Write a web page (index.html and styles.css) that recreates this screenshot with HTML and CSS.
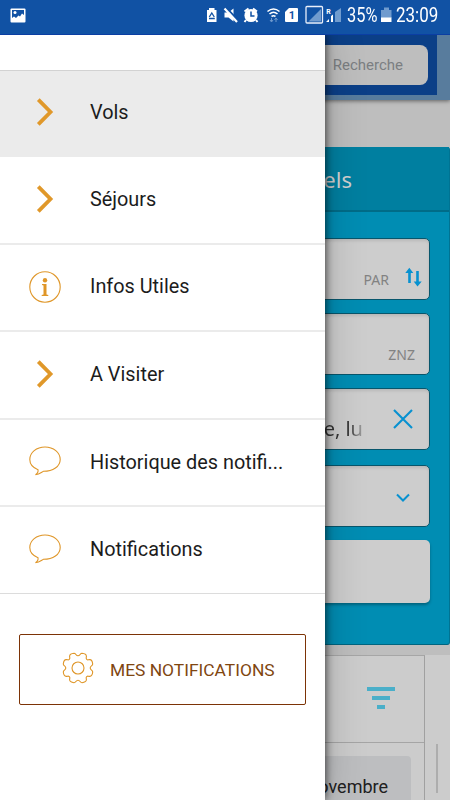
FILE: index.html
```html
<!DOCTYPE html>
<html lang="fr">
<head>
<meta charset="utf-8">
<meta name="viewport" content="width=device-width, initial-scale=1">
<title>Menu</title>
<link rel="stylesheet" href="styles.css">
</head>
<body>
<header class="status">
  <svg class="status-photo" width="16" height="16" viewBox="0 0 16 16"><rect x=".5" y=".5" width="15" height="14" rx="1" fill="#fff"/><path d="M2 2h12v5l-2-1.5-2 3-1.5-1L6 10 4 8.500 2 10z" fill="#1152a4"/><circle cx="5" cy="4.500" r="1.500" fill="#fff"/></svg>
  <div class="status-right">
    <svg width="142" height="34" viewBox="205 0 142 34">
      <g fill="#fff">
        <path d="M207 10h2V8h5.500v2h2v12H207z"/>
        <path d="M209.300 17 211.800 13l2.500 4M209 18.500h5.800" fill="none" stroke="#1152a4" stroke-width="1.300"/>
        <path d="M224.500 12.500h4l5-4v13l-5-4h-4z"/>
        <path d="m226.500 8 13 14" stroke="#1152a4" stroke-width="2"/>
        <path d="m224.500 8.500 12.500 13.500" stroke="#fff" stroke-width="2.200"/>
        <circle cx="251" cy="15.500" r="6.600"/>
        <path d="m244.500 11.500 4-3m8.500 3-4-3M246 20l-1.500 2M256 20l1.500 2" stroke="#fff" stroke-width="2"/>
        <path d="M251 11.500v4.500h3.500" fill="none" stroke="#1152a4" stroke-width="1.500"/>
        <path d="M267.500 11.500q6-5 12 0M269.500 14q4-3.500 8 0M271.500 16.500q2-1.500 4 0" fill="none" stroke="#fff" stroke-width="1.600"/>
        <path d="M271.500 18v3.500m-1.500-1.500 1.500 2 1.500-2M276 22v-3.500m-1.500 1.500 1.500-2 1.500 2" fill="none" stroke="#6f99cd"/>
        <path d="M289 8h8q1 0 1 1v12q0 1-1 1h-11q-1 0-1-1v-9z"/>
      </g>
      <text x="288.800" y="19" class="sim">1</text>
      <rect x="306" y="6.500" width="16.500" height="16.500" rx="1" fill="#1152a4" stroke="#e9effa" stroke-width="1.300"/>
      <path d="M308.500 21.500 321 9v12.500z" fill="#709bce"/>
      <text x="326.300" y="14" class="roaming">R</text>
      <path d="M326 22l3-3v3zM331 22v-6l2-1.500V22z" fill="#fff"/>
      <path d="M335 22V12l6-4v14z" fill="#709bce"/>
    </svg>
    <span class="reading percent">35%</span>
    <svg class="battery" width="11" height="15" viewBox="0 0 11 15"><path d="M0 3h3V.5h5V3h2.500v8H0z" fill="#709bce"/><path d="M0 10.500h10.500V15H0z" fill="#fff"/></svg>
    <span class="reading clock">23:09</span>
  </div>
</header>
<div class="screen">
  <main class="page">
    <div class="topbar"><div class="search">Recherche</div></div>
    <div class="gap"></div>
    <section class="booking">
      <div class="tab">Hôtels</div>
      <div class="form">
        <div class="field"><span class="code">PAR</span>
          <svg width="17" height="20" viewBox="0 0 17 20" fill="none" stroke="#0791d0" stroke-width="2.600"><path d="M4.500 16V4M12.500 4v12"/><path d="M.3 6h8L4.300 .8zM8.700 14.500h8L12.500 19.500z" fill="#0791d0" stroke="none"/></svg>
        </div>
        <div class="field"><span class="code">ZNZ</span></div>
        <div class="field dates"><span class="range">e, lu</span>
          <svg width="20" height="20" viewBox="0 0 20 20" fill="none" stroke="#0791d0" stroke-width="2.100"><path d="m1 1 18 18M19 1 1 19"/></svg>
        </div>
        <div class="field select">
          <svg width="14" height="9" viewBox="0 0 14 9" fill="none" stroke="#0791d0" stroke-width="2"><path d="m1 1.500 6 6 6-6"/></svg>
        </div>
        <div class="field plain"></div>
      </div>
    </section>
    <section class="results">
      <div class="list">
        <div class="filter"><svg width="28" height="22" viewBox="0 0 28 22" fill="#4aafc9"><path d="M0 0h28v4H0zM5 9h18v4H5zM10 18h8v4h-8z"/></svg></div>
        <div class="month">novembre</div>
      </div>
      <div class="scroll"></div>
    </section>
  </main>
  <nav class="drawer">
    <ul class="menu">
      <li class="item active"><svg class="icon" viewBox="0 0 32 32"><path class="chevron" d="m9.300 3.700 12.200 12.300L9.300 28.300"/></svg><span>Vols</span></li>
      <li class="item"><svg class="icon" viewBox="0 0 32 32"><path class="chevron" d="m9.300 3.700 12.200 12.300L9.300 28.300"/></svg><span>Séjours</span></li>
      <li class="item"><svg class="icon" viewBox="0 0 32 32"><circle class="line" cx="16" cy="16" r="15.200"/><circle class="solid" cx="16" cy="9.200" r="2.200"/><path class="solid" d="M13 13h4.500v10.500l1.800.5v1h-6.600v-1l1.800-.5v-9L13 14z"/></svg><span>Infos Utiles</span></li>
      <li class="item"><svg class="icon" viewBox="0 0 32 32"><path class="chevron" d="m9.300 3.700 12.200 12.300L9.300 28.300"/></svg><span>A Visiter</span></li>
      <li class="item"><svg class="icon" viewBox="0 0 32 32"><path class="line" d="M9 23.700C3.500 21.500.8 17.500.8 13.500.8 6.500 7.500 1 16 1s15.200 5.500 15.200 12.500S24 25.300 14.500 25.300C12.800 26 10.500 28.700 6.500 28.700 8.700 27.500 9.400 26 9 23.700z"/></svg><span>Historique des notifi...</span></li>
      <li class="item"><svg class="icon" viewBox="0 0 32 32"><path class="line" d="M9 23.700C3.500 21.500.8 17.500.8 13.500.8 6.500 7.500 1 16 1s15.200 5.500 15.200 12.500S24 25.300 14.500 25.300C12.800 26 10.500 28.700 6.500 28.700 8.700 27.500 9.400 26 9 23.700z"/></svg><span>Notifications</span></li>
    </ul>
    <button class="notify">
      <svg class="icon" viewBox="0 0 32 32"><circle class="line" cx="16" cy="16" r="6"/><path class="line" d="M16 3.800C18.200 3.800 18 1.300 20 1.300 22 1.500 24.300 2.500 24.400 4.200 24.500 6 23.500 6 24.700 7.300 26 8.500 26 7.500 27.800 7.600 29.500 7.700 30.500 10 30.700 12 30.700 14 28.200 13.800 28.200 16S30.700 18 30.700 20C30.500 22 29.500 24.300 27.800 24.400 26 24.500 26 23.500 24.700 24.700 23.500 26 24.500 26 24.400 27.800 24.300 29.500 22 30.500 20 30.700 18 30.700 18.200 28.200 16 28.200S14 30.700 12 30.700C10 30.500 7.700 29.500 7.600 27.800 7.500 26 8.500 26 7.300 24.700 6 23.500 6 24.500 4.200 24.400 2.500 24.300 1.500 22 1.300 20 1.300 18 3.800 18.200 3.800 16S1.300 14 1.300 12C1.500 10 2.500 7.700 4.200 7.600 6 7.500 6 8.500 7.300 7.300 8.500 6 7.500 6 7.600 4.200 7.700 2.500 10 1.500 12 1.300 14 1.300 13.800 3.800 16 3.800z"/></svg>
      <span>MES NOTIFICATIONS</span>
    </button>
  </nav>
</div>
</body>
</html>
```

FILE: styles.css
```css
* { box-sizing: border-box; }
body {
  margin: 0;
  width: 450px;
  height: 800px;
  overflow: hidden;
  font-family: Roboto, sans-serif;
  display: flex;
  flex-direction: column;
}

.status {
  height: 35px;
  flex: none;
  background: #1152a4;
  border-bottom: 1px solid #0b3ea3;
  display: flex;
  justify-content: space-between;
  padding: 0 0 0 10px;
}
.status-photo { margin-top: 8px; }
.status-right { display: flex; width: 245px; }
.status-right svg { flex: none; }
.reading {
  flex: none;
  font-size: 19.500px;
  line-height: 32px;
  color: #fff;
  transform-origin: 0 50%;
}
.percent { width: 34px; transform: scaleX(.84); }
.battery { margin-top: 7px; }
.clock { width: 50px; margin-left: 4px; transform: scaleX(.87); }
.sim { font-size: 11px; font-weight: 700; fill: #1152a4; }
.roaming { font-size: 7px; font-weight: 700; fill: #fff; }

.screen { position: relative; flex: 1; min-height: 0; overflow: hidden; }
.page { height: 100%; background: #bebebe; display: flex; flex-direction: column; }

.topbar {
  height: 65px;
  flex: none;
  background: linear-gradient(#0b3f87, #0b3f87) 0 0 / 437px 60px no-repeat #587c9d;
  padding: 10px 22px 0 200px;
  box-shadow: 0 1px 4px rgba(0, 0, 0, .5);
}
.search {
  height: 40px;
  border-radius: 8px;
  background: #bebebe;
  color: #7b7e82;
  font-size: 15px;
  line-height: 40px;
  text-align: right;
  padding-right: 25px;
}
.gap { height: 47px; flex: none; }

.booking {
  height: 498px;
  flex: none;
  background: #008db3;
  border-right: 1px solid #007392;
  border-bottom: 1px solid #006580;
  border-radius: 0 3px 3px 0;
}
.tab {
  height: 65px;
  background: #007fa0;
  border-bottom: 2px solid #006c88;
  color: #d0d0d0;
  font-family: "Noto Sans", sans-serif;
  font-size: 22px;
  line-height: 65px;
  text-align: right;
  padding-right: 97px;
}
.form { padding: 26px 19px 0 20px; display: grid; grid-template-rows: 62px 62px 62px 62px 63px; row-gap: 13px; }
.field {
  border: 1px solid #08566c;
  border-radius: 5px;
  background: #cdcdcd;
  box-shadow: inset 0 2px 3px rgba(0, 0, 0, .1);
  display: flex;
  justify-content: flex-end;
  align-items: center;
  padding-right: 7px;
  font-family: "Noto Sans", sans-serif;
}
.field:nth-child(4) { position: relative; top: 2px; }
.code { color: #828282; font-size: 14px; padding-top: 21px; margin-right: 16px; }
.field:nth-child(2) .code { margin-right: 7px; }
.field:first-child svg { margin-top: 16px; }
.dates { padding-right: 16px; }
.range {
  font-size: 20px;
  padding-top: 18px;
  margin-right: 30px;
  color: transparent;
  background: linear-gradient(90deg, #343434 65%, #a8a8a8);
  -webkit-background-clip: text;
  background-clip: text;
}
.select { padding-right: 19px; }
.select svg { margin-top: 2px; }
.plain { border: 0; box-shadow: 0 2px 3px rgba(0, 0, 0, .3); position: relative; top: 2px; }

.results { margin-top: 10px; flex: 1; min-height: 0; background: #cccccc; display: flex; }
.list { width: 425px; border-top: 1px solid #a6a6a6; border-right: 1px solid #a0a0a0; }
.filter {
  height: 87px;
  border-bottom: 1px solid #a5a5a5;
  display: flex;
  justify-content: flex-end;
  align-items: center;
  padding: 0 29px 2px 0;
}
.month {
  height: 60px;
  margin: 13px 13px 0 20px;
  border-radius: 4px;
  background: #bdbec0;
  color: #202020;
  font-size: 18px;
  line-height: 62px;
  text-align: right;
  padding-right: 23px;
}
.scroll { width: 2px; height: 49px; margin: 89px 0 0 11px; background: #adadad; }

.drawer {
  position: absolute;
  inset: 0 auto 0 0;
  width: 325px;
  background: #fff;
  box-shadow: 0 0 9px rgba(0, 0, 0, .75), 0 0 40px rgba(0, 0, 0, .2);
  padding-top: 35px;
}
.menu { list-style: none; margin: 0; padding: 0; border-top: 1px solid #d2d2d2; border-bottom: 1px solid #dcdcdc; height: 524px; }
.item {
  height: 87.600px;
  border-bottom: 2px solid #ebebeb;
  display: flex;
  align-items: center;
  gap: 29px;
  padding: 0 0 1px 29px;
  color: #1c1c1c;
  font-size: 19.850px;
  white-space: nowrap;
}
.item:last-child { border-bottom: 0; padding-bottom: 3px; }
.active { height: 86px; padding-bottom: 2px; background: #ebebeb; }
.icon { width: 32px; height: 32px; flex: none; overflow: visible; }
.chevron { fill: none; stroke: #e0982a; stroke-width: 3.800; }
.line { fill: none; stroke: #df9628; stroke-width: 1.100; }
.solid { fill: #df9628; }
.notify {
  display: flex;
  align-items: center;
  gap: 17px;
  width: 287px;
  height: 71px;
  margin: 40px 0 0 19px;
  padding: 0 0 0 42px;
  background: #fff;
  border: 1px solid #7c3306;
  border-radius: 2px;
  color: #804611;
  font: 17.400px Roboto, sans-serif;
  white-space: nowrap;
}
.notify .icon { margin-top: -3px; }
.notify span { margin-left: -1px; margin-top: 1px; }
```
